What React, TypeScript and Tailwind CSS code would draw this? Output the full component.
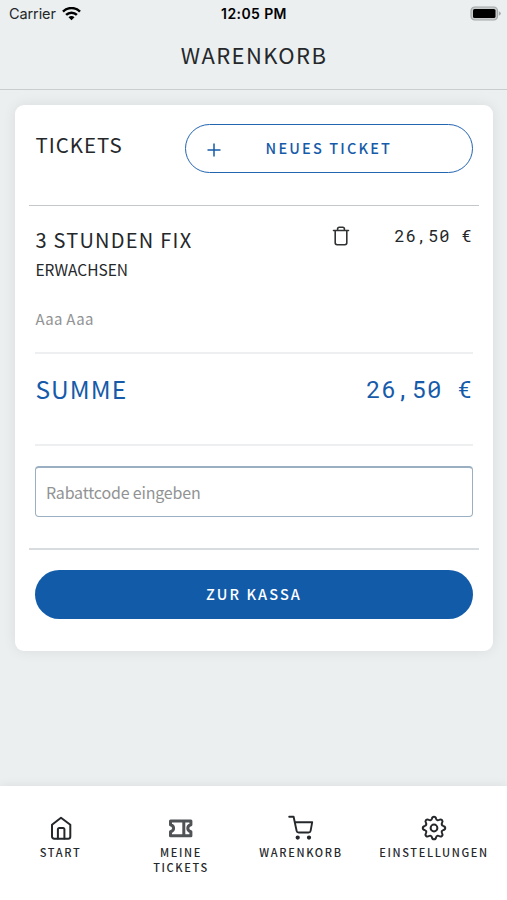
import React from "react";

interface NavItemProps {
  label: string;
  icon: React.ReactNode;
}

const HomeIcon = () => (
  <svg width="24" height="26" viewBox="0 0 24 26" fill="none" stroke="#25282b" strokeWidth="2" strokeLinecap="round" strokeLinejoin="round">
    <path d="M3 9.800 12 2.800l9.300 7v11.700a2.200 2.200 0 0 1-2.200 2.200H5.200A2.200 2.200 0 0 1 3 21.500z" />
    <path d="M8.900 23.500V14.200A1.200 1.200 0 0 1 10.100 13h4.100a1.200 1.200 0 0 1 1.200 1.200v9.300" />
  </svg>
);

const TicketIcon = () => (
  <svg width="26" height="26" viewBox="0 0 26 26" fill="none" stroke="#505356" strokeWidth="3" strokeLinejoin="round">
    <path d="M2.500 6h20.400v3.700q-3.100.9-3.100 3.500t3.100 3.500v4H2.500v-4q3.100-.9 3.100-3.500T2.500 9.700z" />
    <path d="M15.800 6v14.700" />
  </svg>
);

const CartIcon = () => (
  <svg width="26" height="26" viewBox="0 0 26 26" fill="none" stroke="#25282b" strokeWidth="1.900" strokeLinecap="round" strokeLinejoin="round">
    <path d="M1.200 1.800h4.400l3 14q.3 1.700 2 1.700h10q1.700 0 2-1.700l1.600-8.600H6.800" />
    <circle cx="9.700" cy="22.600" r="1.200" fill="#25282b" />
    <circle cx="21" cy="22.600" r="1.200" fill="#25282b" />
  </svg>
);

const GearIcon = () => (
  <svg width="26" height="26" viewBox="0 0 26 26" fill="none" stroke="#25282b" strokeWidth="2" strokeLinejoin="round">
    <circle cx="13" cy="13" r="3.400" />
    <path d="M10.900 3.800C11.400 1.100 14.600 1.100 15.100 3.800C15.500 5.200 16.800 5.700 18 5C20.300 3.500 22.500 5.700 21 8C20.300 9.200 20.800 10.500 22.200 10.900C24.900 11.400 24.900 14.600 22.200 15.100C20.800 15.500 20.300 16.800 21 18C22.500 20.300 20.300 22.500 18 21C16.800 20.300 15.500 20.800 15.100 22.200C14.600 24.900 11.400 24.900 10.900 22.200C10.500 20.800 9.200 20.300 8 21C5.700 22.500 3.500 20.300 5 18C5.700 16.800 5.200 15.500 3.800 15.100C1.100 14.600 1.100 11.400 3.800 10.900C5.200 10.500 5.700 9.200 5 8C3.500 5.700 5.700 3.500 8 5C9.200 5.700 10.500 5.200 10.900 3.800Z" />
  </svg>
);

const TrashIcon = () => (
  <svg width="18" height="20" viewBox="0 0 18 20" fill="none" stroke="#303234" strokeWidth="1.600" strokeLinecap="round" strokeLinejoin="round">
    <path d="M1.500 4.500h15M3.200 4.500v12.300a1.900 1.900 0 0 0 1.900 1.900h7.800a1.900 1.900 0 0 0 1.900-1.900V4.500M5.600 4.200V3a1.700 1.700 0 0 1 1.700-1.700h3.400A1.700 1.700 0 0 1 12.400 3v1.200" />
  </svg>
);

const StatusBar = () => (
  <div className="grid h-[28px] grid-cols-3 items-center font-['Inter',sans-serif] text-black">
    <div className="flex items-center pl-[9px]">
      <span className="w-[53px] text-[14.500px] tracking-[-0.1px] text-[#242628]">Carrier</span>
      <svg width="19" height="14" viewBox="0 0 19 14" fill="none" stroke="#000" strokeWidth="2.500">
        <path d="M1 4.600a12 12 0 0 1 17 0M4.100 7.900a7.600 7.600 0 0 1 10.800 0" />
        <path d="m9.500 13.300-3-3.100a4.200 4.200 0 0 1 6 0z" fill="#000" stroke="none" />
      </svg>
    </div>
    <div className="pb-px pl-px text-center text-[14px] font-semibold tracking-[0.400px] whitespace-nowrap">12:05 PM</div>
    <div className="flex justify-end pr-[6px] pb-[2px]">
      <svg width="31" height="15" viewBox="0 0 31 15">
        <rect x="1" y="1" width="26.500" height="13" rx="3.700" fill="#c9cccc" stroke="#a5a8a8" strokeWidth="1.200" />
        <rect x="3" y="3" width="22.500" height="9" rx="1.600" fill="#000" />
        <path d="M28.800 5.200v4.600q2-.8 2-2.300t-2-2.300" fill="#a5a8a8" />
      </svg>
    </div>
  </div>
);

const NavItem: React.FC<NavItemProps> = ({ label, icon }) => (
  <button className="flex flex-col items-center">
    <span className="flex h-[26px] items-center">{icon}</span>
    <span className="mt-[4px] w-min text-center text-[11px] leading-[14.500px] font-medium tracking-[1.650px]">
      {label}
    </span>
  </button>
);

export default function App() {
  return (
    <div className="flex h-[900px] w-[507px] flex-col overflow-hidden bg-[#ebeff0] font-['Noto_Sans_CJK_SC',sans-serif] text-[#25282b]">
      <header className="h-[90px] border-b border-[#c9cdce]">
        <StatusBar />
        <h1 className="pt-[10px] pl-px text-center text-[22px] leading-[32px] tracking-[1.400px]">WARENKORB</h1>
      </header>

      <main className="flex-1 pt-[15px] pr-[14.400px] pl-[15.400px]">
        <section className="flex h-[546px] flex-col rounded-[9px] bg-white px-[14px] shadow-[0_0_14px_rgba(0,0,0,0.08)]">
          <div className="flex h-[101px] items-start justify-between border-b border-[#c3c9cb] px-[6px] pt-[19px]">
            <h2 className="pt-[5px] text-[20.500px] leading-[30px] tracking-[1.000px]">TICKETS</h2>
            <button className="flex h-[49px] w-[288px] items-center rounded-full border border-[#2465b1] pl-[21px] text-[#165ba9]">
              <svg width="14" height="14" viewBox="0 0 14 14" fill="none" stroke="currentColor" strokeWidth="1.500" className="mt-[2px]">
                <path d="M7 .5v13M.5 7h13" />
              </svg>
              <span className="pb-px pl-[45px] text-[14.500px] leading-[22px] font-medium tracking-[2.150px]">NEUES TICKET</span>
            </button>
          </div>

          <div className="px-[6px]">
            <div className="flex h-[148px] items-start border-b-2 border-[#eeeff1] pt-[19px]">
              <div className="flex-1">
                <h3 className="text-[20px] leading-[30px] tracking-[1.250px]">3 STUNDEN FIX</h3>
                <p className="text-[15.500px] leading-[28px]">ERWACHSEN</p>
                <p className="pt-[22px] text-[15px] leading-[28px] tracking-[0.300px] text-[#919394]">Aaa Aaa</p>
              </div>
              <button className="mt-[1px] mr-[45px]">
                <TrashIcon />
              </button>
              <span className="-mt-px font-['Roboto_Mono','DejaVu_Sans_Mono',monospace] text-[17px] leading-[24px] tracking-[0.950px]">26,50 €</span>
            </div>

            <div className="flex h-[92px] items-start justify-between border-b-2 border-[#eeeff1] pt-[17px] text-[#165ba9]">
              <span className="text-[24.500px] leading-[36px] tracking-[1.100px]">SUMME</span>
              <span className="font-['Roboto_Mono','DejaVu_Sans_Mono',monospace] text-[24px] leading-[37px] tracking-[0.800px]">26,50 €</span>
            </div>

            <input
              placeholder="Rabattcode eingeben"
              className="mt-[20px] block h-[51px] w-full rounded-[4px] border border-t-2 border-[#9aafc1] px-[9.500px] pb-px text-[16px] tracking-[-0.180px] placeholder:text-[#919394]"
            />
          </div>

          <div className="mt-[31px] border-t-2 border-[#d9dcdf] px-[6px] pt-[20px]">
            <button className="h-[49px] w-full rounded-full bg-[#125ba9] pb-[2px] text-[14.500px] font-medium tracking-[2.100px] text-white">
              ZUR KASSA
            </button>
          </div>
        </section>
      </main>

      <nav className="grid h-[114px] grid-cols-[121px_120px_120px_146px] items-start bg-white pt-[29px] shadow-[0_0_10px_rgba(0,0,0,0.08)]">
        <NavItem label="START" icon={<HomeIcon />} />
        <NavItem label="MEINE TICKETS" icon={<TicketIcon />} />
        <NavItem label="WARENKORB" icon={<CartIcon />} />
        <NavItem label="EINSTELLUNGEN" icon={<GearIcon />} />
      </nav>
    </div>
  );
}
